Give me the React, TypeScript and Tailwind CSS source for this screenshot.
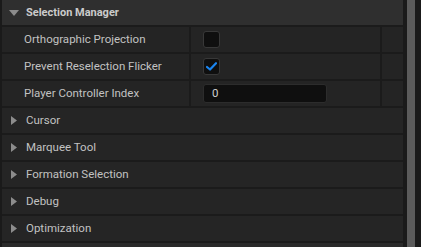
import React from "react";

const font = { fontFamily: "Roboto, 'Noto Sans', sans-serif" };

function Caret({ open }: { open: boolean }) {
  if (open) {
    return (
      <svg width="10" height="6" viewBox="0 0 10 6" className="shrink-0">
        <path d="M0 0 L10 0 L5 6 Z" fill="#8c8c8c" />
      </svg>
    );
  }
  return (
    <svg width="6" height="9" viewBox="0 0 6 9" className="shrink-0">
      <path d="M0 0 L6 4.5 L0 9 Z" fill="#8c8c8c" />
    </svg>
  );
}

function PropRow({ label, children }: { label: string; children: React.ReactNode }) {
  return (
    <div className="flex h-[27px] border-b-2 border-[#1b1b1b] bg-[#242424]">
      <div className="flex w-[189px] items-center border-r-2 border-[#1b1b1b] pl-[22px] pt-[1px] text-[11.5px] text-[#c2c2c2]">
        {label}
      </div>
      <div className="flex w-[189px] items-center pl-[12px]">{children}</div>
      <div className="flex-1 border-l-2 border-[#1b1b1b]" />
    </div>
  );
}

function Checkbox({ checked }: { checked?: boolean }) {
  return (
    <div className="flex h-[17px] w-[17px] items-center justify-center rounded-[3px] border border-[#383838] bg-[#0f0f0f]">
      {checked ? (
        <svg width="11" height="9" viewBox="0 0 11 9">
          <path d="M1 5 L4 7.5 L10 1.2" stroke="#1a85f0" strokeWidth="2.2" fill="none" strokeLinecap="round" strokeLinejoin="round" />
        </svg>
      ) : null}
    </div>
  );
}

function Category({ label }: { label: string }) {
  return (
    <div className="flex h-[27px] items-center gap-[9px] border-b-2 border-[#1b1b1b] bg-[#252525] pl-[9px] text-[11.5px] text-[#c2c2c2]">
      <Caret open={false} />
      <span className="pt-[1px]">{label}</span>
    </div>
  );
}

export default function App() {
  const categories = ["Cursor", "Marquee Tool", "Formation Selection", "Debug", "Optimization"];
  return (
    <div className="flex h-[247px] w-[421px] overflow-hidden bg-[#1a1a1a] pl-[2px]" style={font}>
      <div className="w-[401px] shrink-0">
        <div className="flex h-[27px] items-center gap-[7px] border-b-2 border-[#1b1b1b] bg-[#2f2f2f] pl-[7px] text-[11px] font-bold text-[#cbcbcb]">
          <Caret open />
          <span className="pt-[1px]">Selection Manager</span>
        </div>
        <PropRow label="Orthographic Projection">
          <Checkbox />
        </PropRow>
        <PropRow label="Prevent Reselection Flicker">
          <Checkbox checked />
        </PropRow>
        <PropRow label="Player Controller Index">
          <div className="flex h-[19px] w-[124px] items-center rounded-[3px] border border-[#2c2c2c] bg-[#0f0f0f] pl-[8px] text-[11.5px] text-[#d0d0d0]">
            0
          </div>
        </PropRow>
        {categories.map((c) => (
          <Category key={c} label={c} />
        ))}
        <div className="h-[27px] bg-[#2a2a2a]" />
      </div>
      <div className="ml-[4px] w-[8px] shrink-0 bg-[#5b5b5b]" />
    </div>
  );
}
